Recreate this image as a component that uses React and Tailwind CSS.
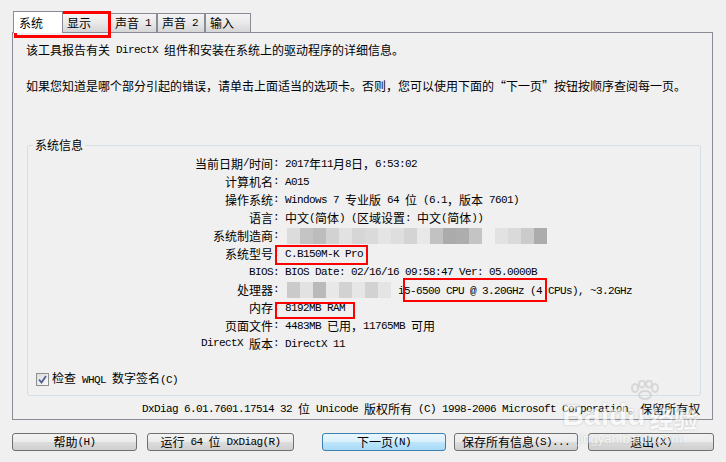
import React from 'react';

const CJK = /([\u2E80-\u9FFF\uFF00-\uFFEF\u3000-\u303F\u201C\u201D]+)/;

// mixed text: CJK at 12px full width, latin as 6px-wide mono
function T({ s }) {
  return s.split(CJK).map((p, i) => {
    if (!p) return null;
    if (CJK.test(p)) {
      return <span key={i} className="font-['Noto_Sans_CJK_SC'] text-[12px]">{p}</span>;
    }
    return <span key={i} className="font-['Liberation_Mono'] text-[11px] tracking-[-0.6px]">{p}</span>;
  });
}

function Mosaic({ cells }) {
  return (
    <div className="flex h-[16px]">
      {cells.map((c, i) => (
        <div key={i} className="w-[13px] h-full" style={{ background: c || 'transparent' }} />
      ))}
    </div>
  );
}

const maker = ['#dcdcdc', '#c4c4c4', '#bcbcbc', '#d2d2d2', '#e2e2e2', '#d6d6d6', '#dadada', '#e4e4e4', '#dedede', '#d4d4d4', '#e8e8e8', '#c2c2c2', '#ababab', '#adadad', '#c4c4c4', null, '#e2e2e2', '#dadada', '#cbcbcb', '#acacac'];
const cpu = ['#cacaca', '#e2e2e2', '#bababa', '#e8e8e8', '#d2d2d2', '#e6e6e6', '#d2d2d2', '#e4e4e4'];

const rows = [
  ['当前日期/时间:', '2017年11月8日，6:53:02'],
  ['计算机名:', 'A015'],
  ['操作系统:', 'Windows 7 专业版 64 位 (6.1，版本 7601)'],
  ['语言:', '中文(简体) (区域设置: 中文(简体))'],
  ['系统制造商:', 'maker'],
  ['系统型号:', 'C.B150M-K Pro'],
  ['BIOS:', 'BIOS Date: 02/16/16 09:58:47 Ver: 05.0000B'],
  ['处理器:', 'cpu'],
  ['内存:', '8192MB RAM'],
  ['页面文件:', '4483MB 已用，11765MB 可用'],
  ['DirectX 版本:', 'DirectX 11'],
];

const tabs = [
  { label: '显示', w: 'w-[47px]', ml: 'ml-[-1px]' },
  { label: '声音 1', w: 'w-[47px]', ml: 'ml-[1px]' },
  { label: '声音 2', w: 'w-[48px]', ml: 'ml-[0px]' },
  { label: '输入', w: 'w-[46px]', ml: 'ml-[0px]' },
];

const buttons = [
  { label: '帮助(H)', cls: 'ml-[12px] w-[125px]' },
  { label: '运行 64 位 DxDiag(R)', cls: 'ml-[10px] w-[147px]' },
  { label: '下一页(N)', cls: 'ml-[28px] w-[124px]', primary: true },
  { label: '保存所有信息(S)...', cls: 'ml-[8px] w-[124px]' },
  { label: '退出(X)', cls: 'ml-[10px] w-[126px]' },
];

export default function App() {
  return (
    <div className="relative w-[726px] h-[462px] overflow-hidden bg-[#f0f0f0] pt-[11px] text-black font-['Noto_Sans_CJK_SC'] text-[12px] whitespace-pre">
      {/* tabs */}
      <div className="flex items-end h-[21px] ml-[13px]">
        <div className="relative z-10 w-[50px] h-[22px] mb-[-1px] bg-white border border-b-0 border-[#898c95] pl-[5px] flex items-center">
          <T s="系统" />
        </div>
        {tabs.map(t => (
          <div key={t.label} className={`${t.w} ${t.ml} h-[19px] border border-b-0 border-[#898c95] bg-linear-to-b from-[#f4f4f4] via-[#e9e9e9] to-[#d6d6d6] pl-[4px] flex items-center`}>
            <T s={t.label} />
          </div>
        ))}
      </div>

      {/* tab page */}
      <div className="ml-[12px] w-[701px] h-[388px] border border-[#898c95] flex flex-col">
        <div className="mt-[10px] pl-[13px] h-[14px] flex items-center">
          <T s="该工具报告有关 DirectX 组件和安装在系统上的驱动程序的详细信息。" />
        </div>
        <div className="mt-[22px] pl-[13px] h-[14px] flex items-center">
          <T s="如果您知道是哪个部分引起的错误，请单击上面适当的选项卡。否则，您可以使用下面的“下一页”按钮按顺序查阅每一页。" />
        </div>

        {/* group box */}
        <div className="relative mt-[52px] ml-[14px] w-[674px] h-[251px] border border-[#d5dfe5] rounded-[3px] pt-[9px] flex flex-col">
          <div className="absolute left-[5px] top-[-8px] h-[14px] px-[2px] bg-[#f0f0f0] flex items-center">
            <T s="系统信息" />
          </div>
          {rows.map(([k, v]) => (
            <div key={k} className="flex h-[18px] items-center">
              <div className="w-[251px] flex justify-end">
                <T s={k} />
              </div>
              <div className="ml-[6px] flex items-center">
                {v === 'maker' ? (
                  <div className="ml-[2px]"><Mosaic cells={maker} /></div>
                ) : v === 'cpu' ? (
                  <>
                    <div className="ml-[2px]"><Mosaic cells={cpu} /></div>
                    <div className="ml-[7px]"><T s="i5-6500 CPU @ 3.20GHz (4 CPUs), ~3.2GHz" /></div>
                  </>
                ) : (
                  <T s={v} />
                )}
              </div>
            </div>
          ))}
          <div className="mt-[17px] h-[18px] pl-[8px] flex items-center">
            <div className="w-[13px] h-[13px] border border-[#8e8f8f] bg-[linear-gradient(135deg,#dcdcdc,#fbfbfb)] flex items-center justify-center">
              <svg width="9" height="9" viewBox="0 0 9 9">
                <path d="M1 4.5 L3.5 7.5 L8 1" fill="none" stroke="#4a5f97" strokeWidth="1.8" />
              </svg>
            </div>
            <div className="ml-[3px]"><T s="检查 WHQL 数字签名(C)" /></div>
          </div>
        </div>

        <div className="mt-[6px] pl-[129px] h-[14px] flex items-center">
          <T s="DxDiag 6.01.7601.17514 32 位 Unicode 版权所有 (C) 1998-2006 Microsoft Corporation。保留所有权" />
        </div>
      </div>

      {/* buttons */}
      <div className="flex mt-[13px]">
        {buttons.map(b => (
          <div
            key={b.label}
            className={`${b.cls} h-[18px] rounded-[3px] border flex items-center justify-center ${
              b.primary
                ? 'border-[#3c7fb1] bg-[linear-gradient(to_bottom,#eaf6fd_0%,#d9f0fc_50%,#bee6fd_50%,#a7d9f5_100%)]'
                : 'border-[#707070] bg-[linear-gradient(to_bottom,#f2f2f2_0%,#ebebeb_50%,#dddddd_50%,#cfcfcf_100%)]'
            }`}
          >
            <T s={b.label} />
          </div>
        ))}
      </div>

      {/* red annotation boxes */}
      <div className="absolute left-[14px] top-[11px] w-[97px] h-[27px] border-[3px] border-[#ff0000] pointer-events-none" />
      <div className="absolute left-[275px] top-[245px] w-[93px] h-[20px] border-2 border-[#ff0000] pointer-events-none" />
      <div className="absolute left-[275px] top-[302px] w-[80px] h-[17px] border-2 border-[#ff0000] pointer-events-none" />
      <div className="absolute left-[403px] top-[278px] w-[144px] h-[24px] border-2 border-[#ff0000] pointer-events-none" />

      {/* watermark */}
      <div className="absolute left-[560px] top-[380px] w-[140px] h-[75px] pointer-events-none opacity-60 flex flex-col items-center">
        <svg width="34" height="20" viewBox="0 0 34 20" className="ml-[30px]">
          <g fill="none" stroke="#c8c8c8" strokeWidth="2">
            <ellipse cx="7" cy="8" rx="3" ry="4" />
            <ellipse cx="14" cy="4" rx="3" ry="3.5" />
            <ellipse cx="21" cy="4" rx="3" ry="3.5" />
            <ellipse cx="27" cy="8" rx="3" ry="4" />
            <ellipse cx="17" cy="15" rx="6" ry="4" />
          </g>
        </svg>
        <div className="flex items-end leading-none text-white font-['Liberation_Sans'] font-bold text-[30px] [text-shadow:0_0_2px_#9a9a9a]">
          <span>Bai</span><span>du</span>
          <span className="ml-[4px] font-['Noto_Sans_CJK_SC'] text-[24px]">经验</span>
        </div>
        <div className="mt-[2px] text-white font-['Liberation_Sans'] text-[13px] leading-none [text-shadow:0_0_2px_#9a9a9a]">jingyan.baidu.com</div>
      </div>
    </div>
  );
}
